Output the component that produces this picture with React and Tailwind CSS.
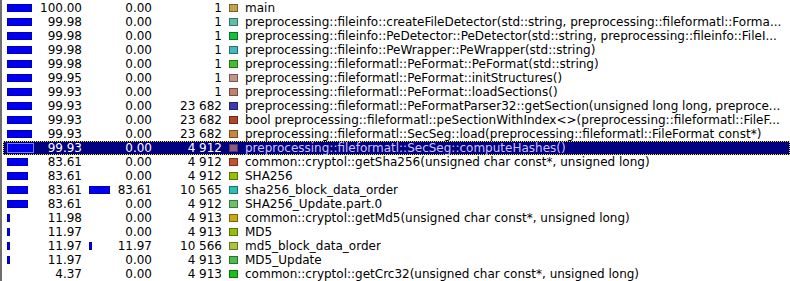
import React from "react";

const rows = [
  { incl: "100.00", self: "0.00", called: "1", color: "#c4a24c", name: "main" },
  { incl: "99.98", self: "0.00", called: "1", color: "#5cc0a8", name: "preprocessing::fileinfo::createFileDetector(std::string, preprocessing::fileformatl::Forma..." },
  { incl: "99.98", self: "0.00", called: "1", color: "#14c03c", name: "preprocessing::fileinfo::PeDetector::PeDetector(std::string, preprocessing::fileinfo::FileI..." },
  { incl: "99.98", self: "0.00", called: "1", color: "#44b8c4", name: "preprocessing::fileinfo::PeWrapper::PeWrapper(std::string)" },
  { incl: "99.98", self: "0.00", called: "1", color: "#44c02c", name: "preprocessing::fileformatl::PeFormat::PeFormat(std::string)" },
  { incl: "99.95", self: "0.00", called: "1", color: "#c4948c", name: "preprocessing::fileformatl::PeFormat::initStructures()" },
  { incl: "99.93", self: "0.00", called: "1", color: "#c08070", name: "preprocessing::fileformatl::PeFormat::loadSections()" },
  { incl: "99.93", self: "0.00", called: "23 682", color: "#3c3cb0", name: "preprocessing::fileformatl::PeFormatParser32::getSection(unsigned long long, preproce..." },
  { incl: "99.93", self: "0.00", called: "23 682", color: "#b04828", name: "bool preprocessing::fileformatl::peSectionWithIndex<>(preprocessing::fileformatl::FileF..." },
  { incl: "99.93", self: "0.00", called: "23 682", color: "#c8863c", name: "preprocessing::fileformatl::SecSeg::load(preprocessing::fileformatl::FileFormat const*)" },
  { incl: "99.93", self: "0.00", called: "4 912", color: "#8c5a84", name: "preprocessing::fileformatl::SecSeg::computeHashes()", selected: true },
  { incl: "83.61", self: "0.00", called: "4 912", color: "#c4522c", name: "common::cryptol::getSha256(unsigned char const*, unsigned long)" },
  { incl: "83.61", self: "0.00", called: "4 912", color: "#94c004", name: "SHA256" },
  { incl: "83.61", self: "83.61", called: "10 565", color: "#2cc0b4", name: "sha256_block_data_order" },
  { incl: "83.61", self: "0.00", called: "4 912", color: "#6cc068", name: "SHA256_Update.part.0" },
  { incl: "11.98", self: "0.00", called: "4 913", color: "#c8a814", name: "common::cryptol::getMd5(unsigned char const*, unsigned long)" },
  { incl: "11.97", self: "0.00", called: "4 913", color: "#94c00c", name: "MD5" },
  { incl: "11.97", self: "11.97", called: "10 566", color: "#b0c040", name: "md5_block_data_order" },
  { incl: "11.97", self: "0.00", called: "4 913", color: "#4cbc4c", name: "MD5_Update" },
  { incl: "4.37", self: "0.00", called: "4 913", color: "#18c018", name: "common::cryptol::getCrc32(unsigned char const*, unsigned long)" },
];

// bar width in px for a percentage (full bar is 25px)
const barWidth = (pct) => Math.round(parseFloat(pct) * 0.25);

const Bar = ({ pct, selected }) => {
  const w = barWidth(pct);
  if (w < 2) return <div />;
  return (
    <div
      className={
        selected
          ? "h-[10px] border border-[#7a7aff] bg-[#0000e8]"
          : "h-[8px] border border-[#0000b4] bg-[#0000f0]"
      }
      style={{ width: w + (selected ? 2 : 0) }}
    />
  );
};

const Row = ({ row }) => {
  const sel = row.selected;
  const textColor = sel ? "text-white" : "text-black";

  const content = (
    <div className="flex h-full items-center">
      <div className={`flex w-[81px] items-center pl-[4px] pr-[2px] ${textColor}`}>
        <div className="w-[26px]">
          <Bar pct={row.incl} selected={sel} />
        </div>
        <div className="flex-1 text-right">{row.incl}</div>
      </div>
      <div className={`flex w-[71px] items-center pl-[5px] pr-[3px] ${textColor}`}>
        <div className="w-[26px]">
          {row.self !== "0.00" && <Bar pct={row.self} selected={sel} />}
        </div>
        <div className="flex-1 text-right">{row.self}</div>
      </div>
      <div className={`w-[69px] pr-[2px] text-right ${textColor}`}>{row.called}</div>
      <div className="flex min-w-0 flex-1 items-center">
        <div
          className="ml-[5px] h-[8px] w-[9px] shrink-0 border border-black/40"
          style={{ backgroundColor: row.color }}
        />
        <div
          className={`ml-[7px] overflow-hidden whitespace-nowrap ${
            sel ? "text-[#cfc4ff]" : "text-black"
          }`}
        >
          {row.name}
        </div>
      </div>
    </div>
  );

  if (sel) {
    return (
      <div className="h-[14px] bg-black">
        <div className="h-full border border-dotted border-[#e8d858] bg-[#000080] bg-clip-padding">
          <div className="-m-px h-[14px]">{content}</div>
        </div>
      </div>
    );
  }

  return <div className="h-[14px]">{content}</div>;
};

export default function App() {
  return (
    <div
      className="h-[281px] w-[790px] overflow-hidden border-l-2 border-[#6e6e6e] bg-white pt-px text-[12px] leading-[14px]"
      style={{ fontFamily: '"DejaVu Sans", sans-serif' }}
    >
      <div className="ml-px">
        {rows.map((row, i) => (
          <Row key={i} row={row} />
        ))}
      </div>
    </div>
  );
}
